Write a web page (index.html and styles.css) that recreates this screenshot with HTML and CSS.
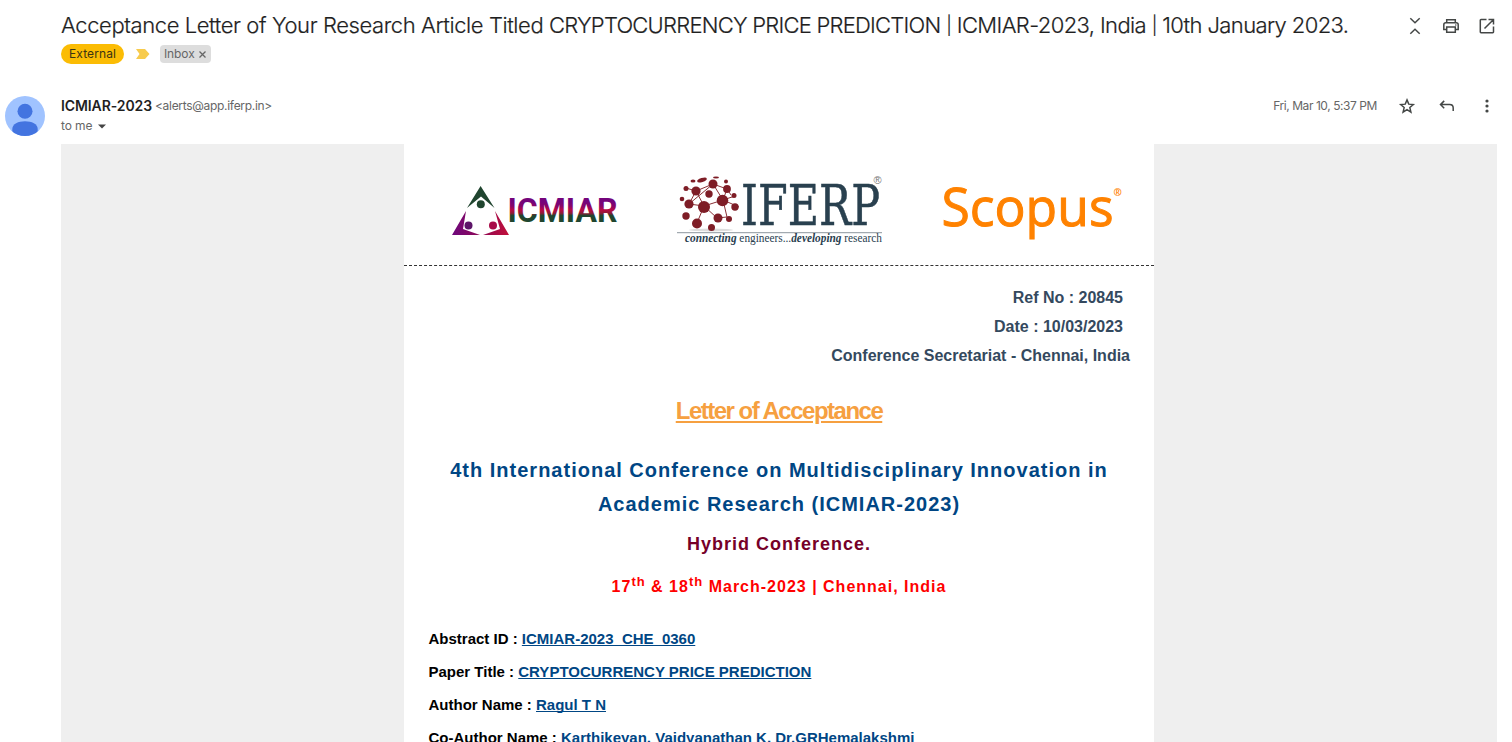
FILE: index.html
```html
<!DOCTYPE html>
<html lang="en">
<head>
<meta charset="utf-8">
<title>Acceptance Letter</title>
<link rel="stylesheet" href="styles.css">
</head>
<body>
<header class="subject">
  <div class="subject-main">
    <h1 class="title">Acceptance Letter of Your Research Article Titled <span class="caps">CRYPTOCURRENCY PRICE PREDICTION</span> <span class="event"><span class="bar">|</span> ICMIAR-2023, India <span class="bar">|</span> 10th January 2023.</span></h1>
    <div class="labels">
      <span class="external">External</span>
      <svg class="marker" width="14" height="10" viewBox="0 0 14 10"><path d="M0 0h9l4.500 5L9 10H0l3.500-5z" fill="#f7cb4d"/></svg>
      <span class="inbox">Inbox <svg width="7" height="7" viewBox="0 0 7 7"><path d="M.5.5l6 6M6.500.5l-6 6" stroke="#666" stroke-width="1.300"/></svg></span>
    </div>
  </div>
  <div class="tools">
    <svg width="20" height="20" viewBox="0 0 20 20"><path d="M5.300 2.300L10 6.700l4.700-4.400M5.300 17.700l4.700-4.400 4.700 4.400" fill="none" stroke="#444746" stroke-width="1.500"/></svg>
    <svg width="20" height="20" viewBox="0 0 20 20"><g fill="none" stroke="#444746" stroke-width="1.500"><path d="M5.700 6.500V3.700h8.600v2.800M5.700 13.400H2.800V8.700q0-2 2-2h10.400q2 0 2 2v4.700h-2.900"/><path d="M5.700 11.100h8.600v5.200H5.700z"/></g><circle cx="14.800" cy="9" r=".8" fill="#444746"/></svg>
    <svg width="20" height="20" viewBox="0 0 20 20"><path d="M9.500 3.500H4q-.7 0-.7.700V16q0 .7.700.7h11.800q.7 0 .7-.7v-5.500M11.500 3.500h5v5M16.300 3.700L7.500 12.500" fill="none" stroke="#444746" stroke-width="1.500"/></svg>
  </div>
</header>
<section class="sender">
  <svg class="avatar" width="40" height="40" viewBox="0 0 40 40"><defs><clipPath id="face"><circle cx="20" cy="20" r="20"/></clipPath></defs><g clip-path="url(#face)"><path d="M0 0h40v40H0z" fill="#a0c3ff"/><circle cx="20" cy="15.300" r="7.500" fill="#4374e0"/><path d="M7.300 40v-7c0-5 6-7.700 12.700-7.700S32.700 28 32.700 33v7z" fill="#4374e0"/></g></svg>
  <div class="who">
    <div class="from"><b class="name">ICMIAR-2023</b><span class="address">&lt;alerts@app.iferp.in&gt;</span></div>
    <div class="to"><span>to me</span><svg width="8" height="5" viewBox="0 0 8 5"><path d="M0 .5h8L4 4.500z" fill="#444"/></svg></div>
  </div>
  <span class="date">Fri, Mar 10, 5:37 PM</span>
  <div class="actions">
    <svg width="20" height="20" viewBox="0 0 20 20"><path d="M10 3.900l1.750 4.250 4.550.4-3.450 3 1.050 4.500L10 13.650l-3.900 2.400 1.050-4.500-3.450-3 4.550-.4z" fill="none" stroke="#444746" stroke-width="1.500"/></svg>
    <svg width="20" height="20" viewBox="0 0 20 20"><path d="M7.200 4.900L3.500 8.600l3.700 3.700M3.700 8.600h9q3.500 0 3.500 3.500v3" fill="none" stroke="#444746" stroke-width="1.500"/></svg>
    <svg width="20" height="20" viewBox="0 0 20 20"><g fill="#444746"><circle cx="10" cy="5" r="1.600"/><circle cx="10" cy="10" r="1.600"/><circle cx="10" cy="15" r="1.600"/></g></svg>
  </div>
</section>
<main class="message">
  <article class="letter">
    <div class="logos">
      <svg width="750" height="121" viewBox="0 0 750 121">
        <defs>
          <linearGradient id="word" x1="0" y1="0" x2="0" y2="1"><stop offset=".3" stop-color="#74047b"/><stop offset=".4" stop-color="#86056a"/><stop offset=".5" stop-color="#b80942"/><stop offset=".58" stop-color="#8d1c38"/><stop offset=".64" stop-color="#21452f"/></linearGradient>
          <linearGradient id="base" x1="0" x2="1"><stop stop-color="#6d087d"/><stop offset=".55" stop-color="#930751"/><stop offset="1" stop-color="#c1103a"/></linearGradient>
        </defs>
        <path d="M76.600 42L90.500 64 77 52.500 63 64z" fill="#20452f"/>
        <path d="M62 67L48 91h28l-17-6zM91 67l14 24H79l17-6z" fill="url(#base)"/>
        <circle cx="76.800" cy="60.300" r="4" fill="#20452f"/><circle cx="64.500" cy="81.500" r="4" fill="#5d1468"/><circle cx="89" cy="81.500" r="4" fill="#a80b48"/>
        <text class="icmiar" x="103.500" y="78" textLength="110" lengthAdjust="spacingAndGlyphs" fill="url(#word)">ICMIAR</text>
        <ellipse cx="307" cy="86" rx="22" ry="1.500" fill="#ddd"/>
        <path d="M292 47l17-7 14 5-4 11-19 6-8-15-7 13 15 2 13 12 10-1-4-17 16 7M300 62l-7 17M285 60l24-20M309 40l10 16M282 44l10 3M323 45l4 6M319 56l12-4" fill="none" stroke="#8a3036" stroke-width="1"/>
        <g fill="#7e1d26"><circle cx="292" cy="47" r="4.600"/><circle cx="309" cy="40" r="4.500"/><circle cx="323" cy="45" r="3.900"/><circle cx="305" cy="50" r="3.700"/><circle cx="318.500" cy="56.500" r="5.800"/><circle cx="300" cy="63" r="6"/><circle cx="285" cy="60" r="4.600"/><circle cx="331" cy="63" r="3.700"/><circle cx="314" cy="74" r="4.500"/><circle cx="293" cy="79.500" r="5"/><circle cx="307.500" cy="83.500" r="3.500"/><circle cx="282" cy="72" r="3.700"/><circle cx="325" cy="75" r="3"/><circle cx="278" cy="55" r="2.300"/><circle cx="282" cy="44.500" r="2.500"/><circle cx="330" cy="51.500" r="2.500"/><ellipse cx="289" cy="37" rx="2.500" ry="1.500"/><ellipse cx="298" cy="36" rx="5" ry="2" transform="rotate(-18 298 36)"/><ellipse cx="312" cy="33.500" rx="3" ry="1.100"/><circle cx="322" cy="37.500" r="2"/></g>
        <text class="iferp" x="337" y="81" textLength="139" lengthAdjust="spacingAndGlyphs">IFERP</text>
        <text class="reg" x="469.500" y="40">®</text>
        <path d="M273 88.700h205" stroke="#8d979e"/>
        <text class="tag" x="281" y="98" textLength="197" lengthAdjust="spacingAndGlyphs"><tspan class="strong">connecting</tspan> engineers...<tspan class="strong">developing</tspan> research</text>
        <text class="scopus" x="537.500" y="81.500" textLength="172" lengthAdjust="spacingAndGlyphs">Scopus</text>
        <text class="scopus-reg" x="709.500" y="52">®</text>
      </svg>
    </div>
    <div class="refs">
      <p class="ref inset">Ref No : 20845</p>
      <p class="ref inset">Date : 10/03/2023</p>
      <p class="ref">Conference Secretariat - Chennai, India</p>
    </div>
    <h2 class="heading"><span>Letter of Acceptance</span></h2>
    <h3 class="conf">4th International Conference on Multidisciplinary Innovation in<br>Academic Research (ICMIAR-2023)</h3>
    <p class="hybrid">Hybrid Conference.</p>
    <p class="when">17<sup>th</sup> &amp; 18<sup>th</sup> March-2023 | Chennai, India</p>
    <div class="fields">
      <p class="field">Abstract ID : <u>ICMIAR-2023_CHE_0360</u></p>
      <p class="field">Paper Title : <u>CRYPTOCURRENCY PRICE PREDICTION</u></p>
      <p class="field">Author Name : <u>Ragul T N</u></p>
      <p class="field">Co-Author Name : <u>Karthikeyan, Vaidyanathan K, Dr.GRHemalakshmi</u></p>
    </div>
  </article>
</main>
</body>
</html>
```
FILE: styles.css
```css
* { box-sizing: border-box; }
body { margin: 0; height: 742px; overflow: hidden; background: #fff; font-family: "Liberation Sans", Arial, sans-serif; display: flex; flex-direction: column; }
svg { display: block; flex: none; }
p, h1, h2, h3 { margin: 0; }
.subject { height: 88px; flex: none; display: flex; justify-content: space-between; padding: 12px 15px 0 61px; }
.subject-main { flex: 1; min-width: 0; }
.title { font: 300 22px/26px Inter, sans-serif; color: #1f1f1f; white-space: nowrap; letter-spacing: -0.41px; -webkit-text-stroke: .2px #1f1f1f; }
.caps { letter-spacing: -0.77px; }
.event { letter-spacing: -0.61px; }
.bar { font-size: 18px; vertical-align: 1px; line-height: 1; }
.labels { display: flex; align-items: center; margin-top: 6px; height: 20px; font: 400 12px/18px Inter, sans-serif; }
.external { width: 63px; height: 20px; border-radius: 10px; background: #fbbc04; color: #3c3413; text-align: center; line-height: 20px; letter-spacing: .1px; }
.marker { margin: 0 10px 0 12px; }
.inbox { display: flex; align-items: center; justify-content: space-between; width: 51px; height: 18px; border-radius: 4px; background: #ddd; color: #666; padding: 0 5px 0 4px; letter-spacing: -.1px; }
.tools { display: flex; gap: 16px; margin: 4px 0 0; }
.sender { display: flex; height: 56px; flex: none; padding: 8px 15px 0 5px; font: 400 12px/20px Inter, sans-serif; color: #666; }
.who { margin-left: 16px; flex: 1; }
.from { display: flex; gap: 3px; }
.name { font-size: 14px; font-weight: 600; color: #1f1f1f; letter-spacing: -0.1px; }
.address { letter-spacing: -0.3px; }
.to { display: flex; align-items: center; gap: 6px; letter-spacing: -0.1px; }
.date { letter-spacing: -0.43px; margin-right: 20px; }
.actions { display: flex; gap: 20px; }
.message { margin: 0 15px 0 61px; flex: 1; min-height: 0; background: #efefef; display: flex; justify-content: center; overflow: hidden; }
.letter { width: 750px; background: #fff; font-weight: 700; }
.logos { height: 122px; border-bottom: 1px dashed #333; }
.icmiar { font: 700 34px Roboto, sans-serif; }
.iferp { font: 400 56px "DejaVu Serif", serif; fill: #29404f; stroke: #29404f; stroke-width: .5px; }
.reg { font: 11px "Liberation Sans", sans-serif; fill: #777; }
.tag { font: 400 12px "Liberation Serif", serif; fill: #29404f; }
.strong { font-weight: 700; font-style: italic; }
.scopus { font: 400 53px "Open Sans", "Noto Sans", sans-serif; fill: #ff8200; stroke: #ff8200; stroke-width: 1px; }
.scopus-reg { font: 700 10px "Open Sans", sans-serif; fill: #ff8200; }
.refs { padding: 17px 24px 0 0; text-align: right; color: #34495e; }
.ref { font-size: 16px; line-height: 29px; }
.inset { padding-right: 7px; }
.heading { margin-top: 23px; text-align: center; font-size: 24px; line-height: 36px; letter-spacing: -1.5px; color: #f6a040; text-decoration: underline; }
.conf { margin-top: 24px; text-align: center; font-size: 20px; line-height: 34px; letter-spacing: 1px; color: #004684; white-space: nowrap; }
.hybrid { margin-top: 8px; text-align: center; font-size: 18px; line-height: 30px; letter-spacing: 1px; color: #760028; }
.when { margin-top: 13px; text-align: center; font-size: 16px; line-height: 30px; letter-spacing: 1px; color: #f00; }
.when sup { font-size: 13px; line-height: 0; }
.fields { margin: 20px 0 0 24px; padding-left: .5px; }
.field { font-size: 15px; line-height: 33px; color: #000; white-space: nowrap; }
.field u { color: #004684; text-decoration-skip-ink: none; }
```
